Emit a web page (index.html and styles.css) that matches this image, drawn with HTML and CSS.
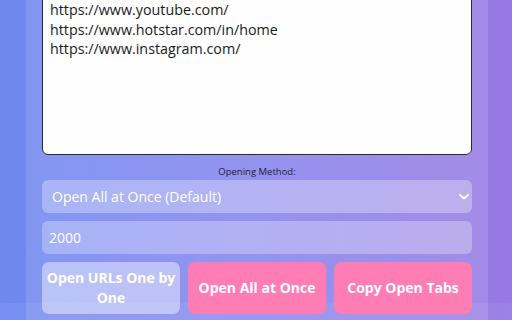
FILE: index.html
```html
<!DOCTYPE html>
<html>
<head>
<meta charset="utf-8">
<link rel="stylesheet" href="styles.css">
</head>
<body>
<div class="page">
  <main class="panel">
    <textarea class="urls" spellcheck="false">https://www.youtube.com/
https://www.hotstar.com/in/home
https://www.instagram.com/</textarea>
    <label class="label">Opening Method:</label>
    <div class="select-wrap">
      <select class="field select">
        <option>Open All at Once (Default)</option>
      </select>
      <svg class="chev" width="10" height="6" viewBox="0 0 10 6"><path d="M1 1l4 3.5L9 1" fill="none" stroke="#fff" stroke-width="1.8" stroke-linecap="round" stroke-linejoin="round"/></svg>
    </div>
    <input class="field input" type="text" value="2000">
    <div class="buttons">
      <button class="btn btn-light">Open URLs One by One</button>
      <button class="btn btn-pink">Open All at Once</button>
      <button class="btn btn-pink">Copy Open Tabs</button>
    </div>
  </main>
</div>
</body>
</html>
```
FILE: styles.css
```css
html, body {
  margin: 0;
  padding: 0;
  height: 100%;
  overflow: hidden;
}
body {
  background:
    linear-gradient(to bottom, transparent 303px, rgba(255,255,255,0.06) 303px),
    linear-gradient(to right, #6d88f0 0%, #8384ee 45%, #9779e2 100%);
  font-family: "Open Sans", "Liberation Sans", sans-serif;
}
.page {
  height: 100%;
}
.panel {
  width: 430px;
  margin: -12px auto 0 26px;
  padding: 0 16px;
  height: 340px;
  background: rgba(255,255,255,0.13);
  display: flex;
  flex-direction: column;
}
.urls {
  box-sizing: border-box;
  width: 430px;
  height: 167px;
  margin: 0;
  padding: 11px 7px;
  border: 1.5px solid #2a2a2a;
  border-radius: 6px;
  background: #fdfefd;
  color: #1b1b1b;
  font-family: "Open Sans", sans-serif;
  font-size: 14.3px;
  line-height: 19.6px;
  resize: none;
  outline: none;
}
.label {
  display: block;
  text-align: center;
  font-size: 9.5px;
  line-height: 12px;
  color: #1e1e2e;
  margin: 11px 0 2px;
}
.select-wrap {
  position: relative;
}
.field {
  box-sizing: border-box;
  width: 430px;
  height: 33px;
  border: none;
  border-radius: 6px;
  background: rgba(255,255,255,0.3);
  color: #fff;
  font-family: "Open Sans", sans-serif;
  font-size: 14px;
  outline: none;
  display: block;
}
.select {
  appearance: none;
  -webkit-appearance: none;
  padding: 0 10px;
}
.chev {
  position: absolute;
  right: 3px;
  top: 14px;
}
.input {
  margin-top: 8px;
  padding: 0 7px;
  background: rgba(255,255,255,0.28);
}
.buttons {
  display: flex;
  gap: 8px;
  margin-top: 8px;
}
.btn {
  flex: 1;
  height: 52px;
  border: none;
  border-radius: 7px;
  color: #fff;
  font-family: "Open Sans", sans-serif;
  font-weight: 700;
  font-size: 14px;
  line-height: 20px;
  padding: 0 4px;
}
.btn-light {
  background: rgba(255,255,255,0.43);
}
.btn-pink {
  background: #fe7db4;
}
```
